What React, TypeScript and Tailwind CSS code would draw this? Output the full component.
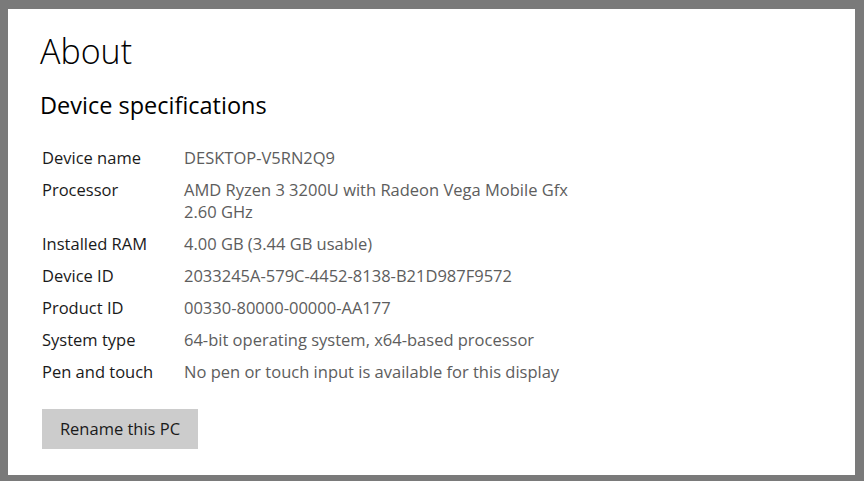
const specs: { label: string; value: string[] }[] = [
  { label: "Device name", value: ["DESKTOP-V5RN2Q9"] },
  {
    label: "Processor",
    value: ["AMD Ryzen 3 3200U with Radeon Vega Mobile Gfx", "2.60 GHz"],
  },
  { label: "Installed RAM", value: ["4.00 GB (3.44 GB usable)"] },
  { label: "Device ID", value: ["2033245A-579C-4452-8138-B21D987F9572"] },
  { label: "Product ID", value: ["00330-80000-00000-AA177"] },
  { label: "System type", value: ["64-bit operating system, x64-based processor"] },
  { label: "Pen and touch", value: ["No pen or touch input is available for this display"] },
];

export default function App() {
  return (
    <div className="h-[481px] w-[864px] bg-[#7a7a7a] pb-[6px] pl-[8px] pr-[9px] pt-[9px] font-['Open_Sans',sans-serif]">
      <div className="flex h-full flex-col bg-white pl-[32px] pt-[21px]">
        <h1 className="text-[34px] font-light leading-[42px] text-black">About</h1>
        <h2 className="mt-[17px] text-[23.5px] font-normal leading-[32px] text-black">
          Device specifications
        </h2>

        <div className="mt-[21px] flex flex-col pl-[2px] text-[16.5px] leading-[22px]">
          {specs.map((row) => (
            <div key={row.label} className="flex py-[5px]">
              <div className="w-[142px] shrink-0 text-[#1a1a1a]">{row.label}</div>
              <div className="flex flex-col text-[#5d5d5d]">
                {row.value.map((line) => (
                  <span key={line}>{line}</span>
                ))}
              </div>
            </div>
          ))}
        </div>

        <button className="mt-[21px] ml-[2px] h-[40px] w-[156px] bg-[#cccccc] text-[16.5px] text-[#1a1a1a]">
          Rename this PC
        </button>
      </div>
    </div>
  );
}
